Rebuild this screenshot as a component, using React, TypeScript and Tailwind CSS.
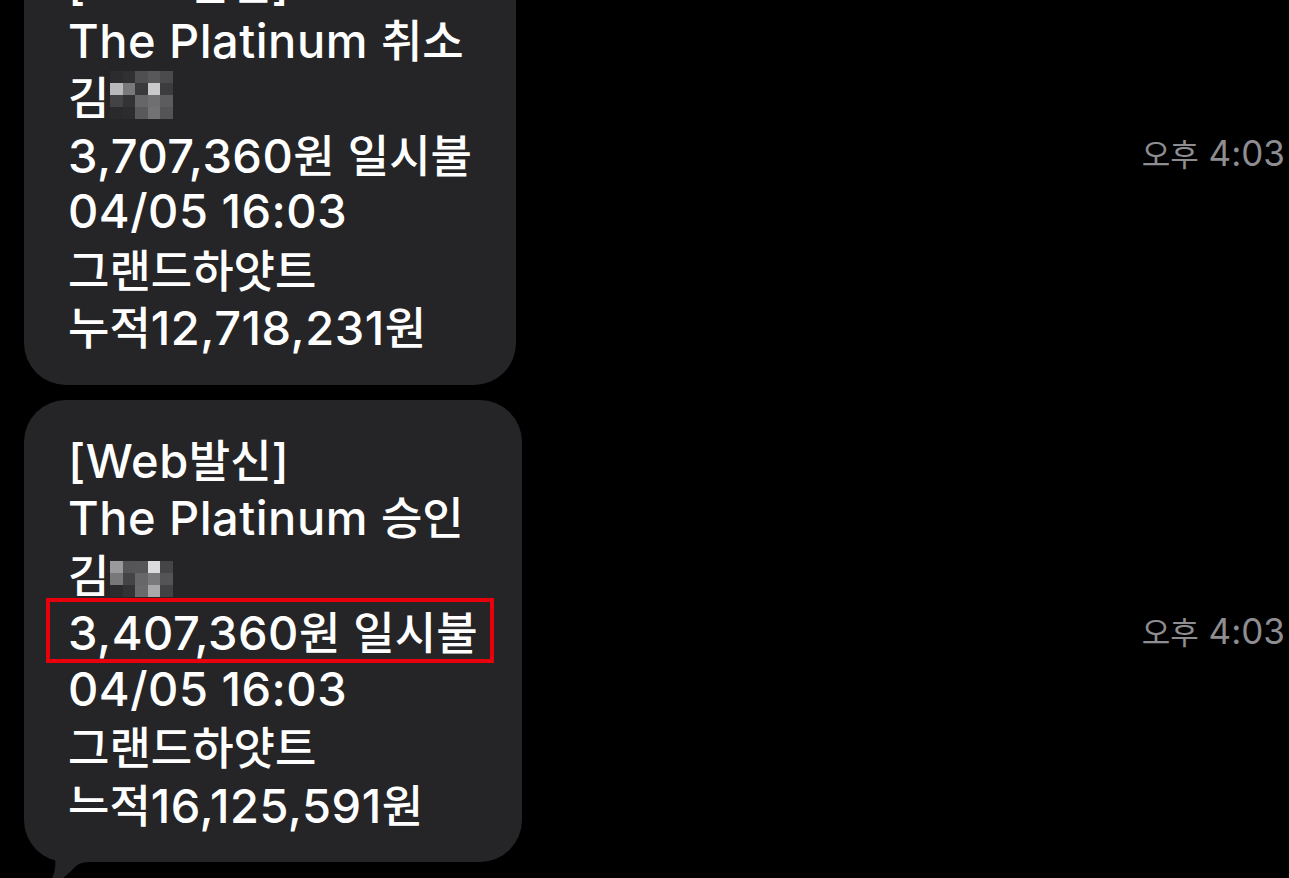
import React from "react";

const LATIN = "font-['Inter','Noto_Sans_CJK_KR',sans-serif]";
const HANGUL = /([가-힣]+)/;

// Renders a line, giving Hangul runs their own face and size.
function Mixed({ text, ko }: { text: string; ko: string }) {
  return (
    <>
      {text.split(HANGUL).map((part, i) =>
        i % 2 === 1 ? (
          <span key={i} className={ko}>
            {part}
          </span>
        ) : (
          <React.Fragment key={i}>{part}</React.Fragment>
        )
      )}
    </>
  );
}

// Pixelated mosaic hiding the rest of a name.
function Mosaic({ cells }: { cells: string[][] }) {
  return (
    <span className="ml-[1px] inline-block align-[-4px]">
      {cells.map((row, r) => (
        <span key={r} className="flex">
          {row.map((c, k) => (
            <span key={k} className="block h-[12px] w-[12.5px]" style={{ backgroundColor: c }} />
          ))}
        </span>
      ))}
    </span>
  );
}

const MOSAIC_A = [
  ["#2c2c2e", "#303032", "#4f4f51", "#58585a", "#4b4b4d"],
  ["#b9b9bb", "#79797b", "#3a3a3c", "#c9c9cb", "#3c3c3e"],
  ["#434345", "#333335", "#666668", "#6f6f71", "#5c5c5e"],
  ["#2a2a2c", "#2c2c2e", "#59595b", "#727274", "#545456"],
];

const MOSAIC_B = [
  ["#9a9a9c", "#555557", "#565658", "#dcdcde", "#454547"],
  ["#78787a", "#444446", "#676769", "#7a7a7c", "#545456"],
  ["#2b2b2d", "#333335", "#6a6a6c", "#a9a9ab", "#424244"],
];

const KO_BODY = "font-['Noto_Sans_CJK_KR',sans-serif] text-[45px] tracking-normal";

type Line = { text: string; mosaic?: string[][]; marked?: boolean };

function Bubble({ lines, tail }: { lines: Line[]; tail?: boolean }) {
  return (
    <div className="relative w-fit rounded-[42px] bg-[#252527] py-[30px] pl-[44px] pr-[44px]">
      <div className={`${LATIN} text-[47px] font-medium leading-[57.5px] tracking-[0.5px] text-white`}>
        {lines.map((l, i) => (
          <div key={i} className="h-[57.5px] whitespace-nowrap">
            {l.marked ? (
              <span className="relative inline-block">
                <Mixed text={l.text} ko={KO_BODY} />
                <span className="pointer-events-none absolute -bottom-[1px] -left-[22px] -right-[16px] -top-[4px] border-[4px] border-[#e8000c]" />
              </span>
            ) : (
              <Mixed text={l.text} ko={KO_BODY} />
            )}
            {l.mosaic && <Mosaic cells={l.mosaic} />}
          </div>
        ))}
      </div>
      {tail && (
        <svg
          className="absolute left-0 top-full -mt-[50px]"
          width="72"
          height="80"
          viewBox="0 0 72 80"
        >
          <path
            d="M0 0 C0 14 12 32 28 41 C33 45 32 58 28 66 L20 78 C34 72 44 62 52 54 C56 51 60 50 66 50 L72 50 L72 0 Z"
            fill="#252527"
          />
        </svg>
      )}
    </div>
  );
}

function Stamp() {
  return (
    <div className={`${LATIN} whitespace-nowrap text-[35px] text-[#8d8d92]`}>
      <Mixed text="오후 4:03" ko="font-['Noto_Sans_CJK_KR',sans-serif] text-[31px]" />
    </div>
  );
}

export default function App() {
  return (
    <div className="h-[878px] w-[1289px] overflow-hidden bg-black">
      <div className="-mt-[78px] flex flex-col gap-[15px] pl-[24px] pr-[4px]">
        <div className="flex items-center justify-between">
          <Bubble
            lines={[
              { text: "[Web발신]" },
              { text: "The Platinum 취소" },
              { text: "김", mosaic: MOSAIC_A },
              { text: "3,707,360원 일시불" },
              { text: "04/05 16:03" },
              { text: "그랜드하얏트" },
              { text: "누적12,718,231원" },
            ]}
          />
          <Stamp />
        </div>
        <div className="flex items-center justify-between">
          <Bubble
            tail
            lines={[
              { text: "[Web발신]" },
              { text: "The Platinum 승인" },
              { text: "김", mosaic: MOSAIC_B },
              { text: "3,407,360원 일시불", marked: true },
              { text: "04/05 16:03" },
              { text: "그랜드하얏트" },
              { text: "누적16,125,591원" },
            ]}
          />
          <Stamp />
        </div>
      </div>
    </div>
  );
}
